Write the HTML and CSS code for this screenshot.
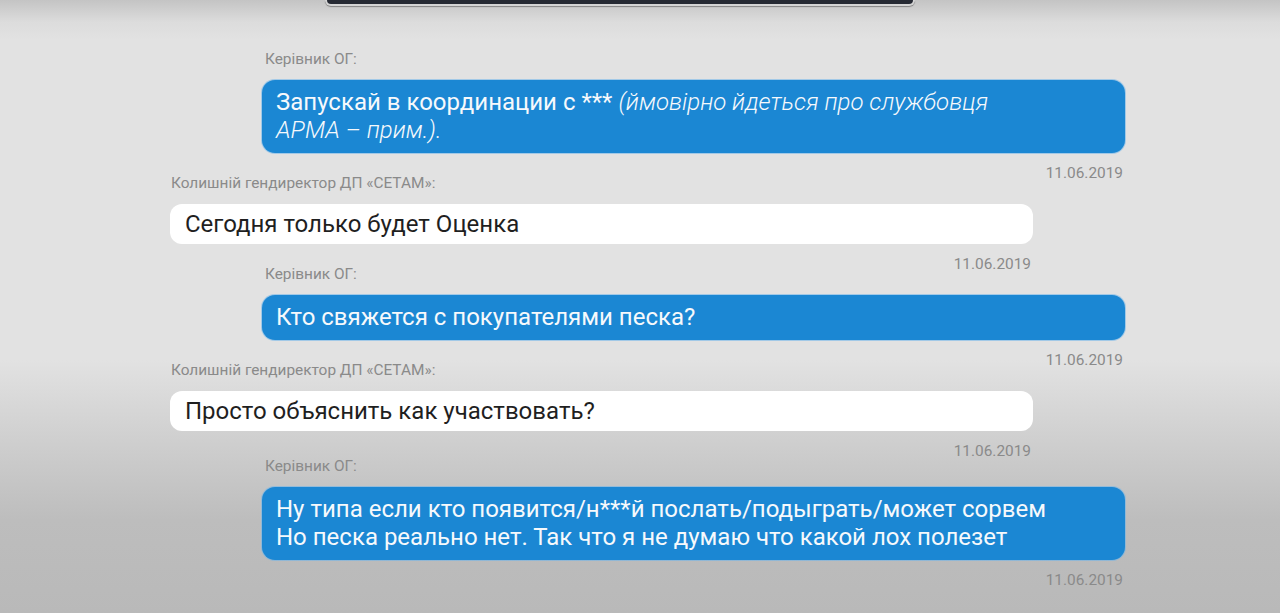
FILE: index.html
```html
<!DOCTYPE html>
<html lang="uk">
<head>
<meta charset="utf-8">
<title>Chat</title>
<link rel="stylesheet" href="styles.css">
</head>
<body>
<div class="topbar"></div>
<div class="chat">
  <div class="msg out">
    <div class="author">Керівник ОГ:</div>
    <div class="bubble">Запускай в координации с *** <span class="note">(ймовірно йдеться про службовця<br>АРМА – прим.).</span></div>
    <div class="date">11.06.2019</div>
  </div>
  <div class="msg in">
    <div class="author">Колишній гендиректор ДП «СЕТАМ»:</div>
    <div class="bubble">Сегодня только будет Оценка</div>
    <div class="date">11.06.2019</div>
  </div>
  <div class="msg out">
    <div class="author">Керівник ОГ:</div>
    <div class="bubble">Кто свяжется с покупателями песка?</div>
    <div class="date">11.06.2019</div>
  </div>
  <div class="msg in">
    <div class="author">Колишній гендиректор ДП «СЕТАМ»:</div>
    <div class="bubble">Просто объяснить как участвовать?</div>
    <div class="date">11.06.2019</div>
  </div>
  <div class="msg out last">
    <div class="author">Керівник ОГ:</div>
    <div class="bubble">Ну типа если кто появится/н***й послать/подыграть/может сорвем<br>Но песка реально нет. Так что я не думаю что какой лох полезет</div>
    <div class="date">11.06.2019</div>
  </div>
</div>
</body>
</html>
```
FILE: styles.css
```css
html, body {
  margin: 0;
  padding: 0;
}
body {
  width: 1280px;
  height: 613px;
  overflow: hidden;
  font-family: Roboto, "Noto Sans", "Liberation Sans", sans-serif;
  background: linear-gradient(to bottom, #c4c4c4 0px, #dcdcdc 22px, #e2e2e2 40px, #e2e2e2 360px, #cfcfcf 440px, #bdbdbd 520px, #b9b9b9 613px);
}
.topbar {
  margin-left: 325px;
  width: 586px;
  height: 4px;
  background: #262a33;
  border: 2px solid #d4d4d4;
  border-top: none;
  border-radius: 0 0 8px 8px;
  box-shadow: 0 1px 1px rgba(0,0,0,0.35);
}
.chat {
  padding: 45px 0 0 170px;
  display: flex;
  flex-direction: column;
}
.msg {
  display: flex;
  flex-direction: column;
  width: 863px;
}
.msg.out {
  margin-left: 92px;
}
.msg.last {
  margin-top: 5px;
}
.author {
  font-size: 15.4px;
  line-height: 16px;
  height: 16px;
  color: #8a8a8a;
  margin-bottom: 13px;
}
.msg.out .author {
  padding-left: 3px;
}
.msg.in .author {
  padding-left: 1px;
}
.bubble {
  font-size: 24px;
  line-height: 28px;
  border-radius: 13px;
}
.msg.out .bubble {
  background: #1b87d3;
  color: #f6f9fc;
  padding: 8px 14px 9px;
  box-shadow: 0 0 0 1px rgba(110, 180, 235, 0.55);
}
.msg.in .bubble {
  background: #ffffff;
  color: #1f1f1f;
  padding: 6px 15px;
  border-radius: 12px;
}
.note {
  font-style: italic;
  font-weight: 300;
}
.date {
  text-align: right;
  font-size: 15.4px;
  line-height: 16px;
  color: #8a8a8a;
  margin-top: 12px;
  margin-bottom: -6px;
  padding-right: 2px;
}
```
